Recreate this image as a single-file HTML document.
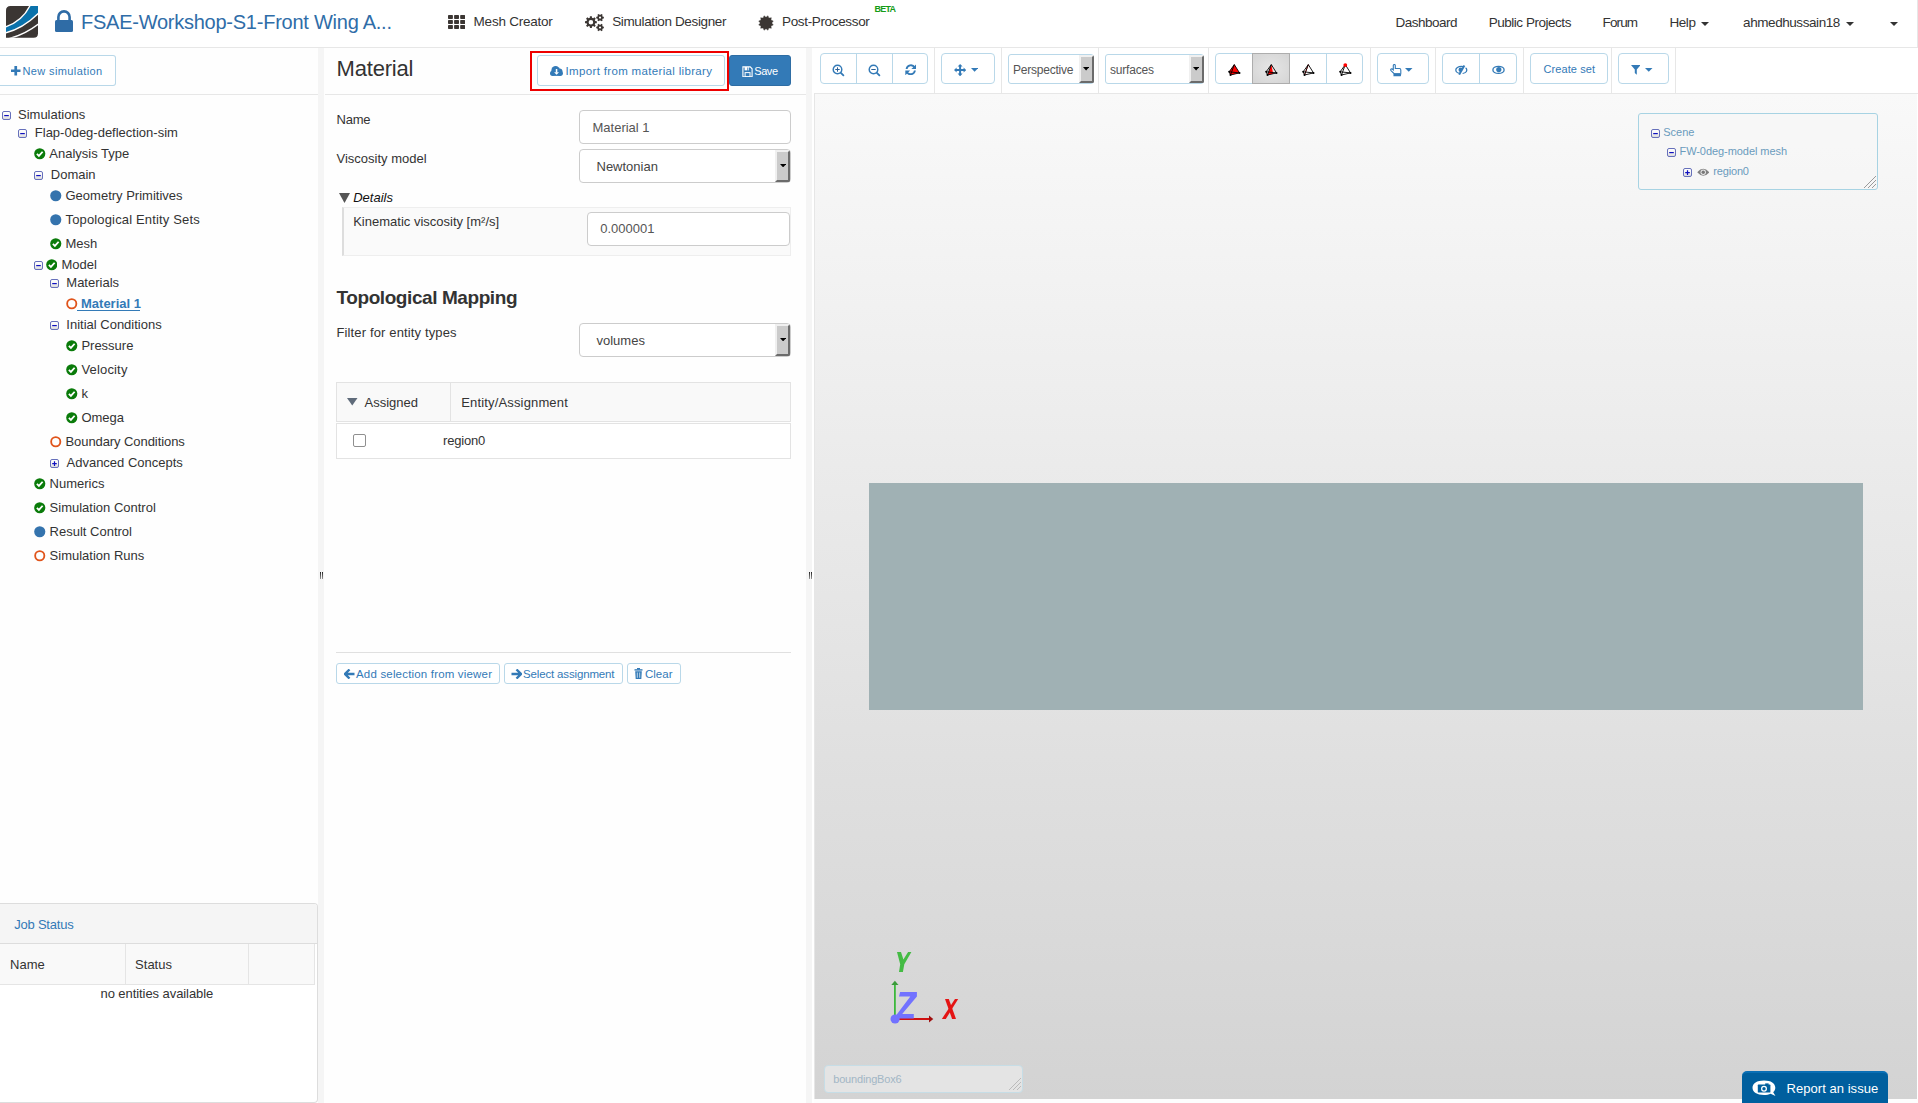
<!DOCTYPE html>
<html><head><meta charset="utf-8"><style>
html,body{margin:0;padding:0;width:1918px;height:1103px;overflow:hidden;background:#fff;}
body{position:relative;font-family:"Liberation Sans",sans-serif;}
.a{position:absolute;display:block;}
.t{position:absolute;white-space:nowrap;}
</style></head><body>
<div class="a" style="left:0px;top:0px;width:1918px;height:47px;background:#fff;"></div>
<div class="a" style="left:0px;top:47px;width:1918px;height:1px;background:#e7e7e7;"></div>
<div class="a" style="left:1917px;top:0px;width:1px;height:48px;background:#e7e7e7;"></div>
<div class="a" style="left:0px;top:48px;width:318px;height:1055px;background:#fefefe;"></div>
<div class="a" style="left:318px;top:48px;width:6px;height:1055px;background:#f5f5f5;"></div>
<div class="a" style="left:324px;top:48px;width:482px;height:1055px;background:#fefefe;"></div>
<div class="a" style="left:806px;top:48px;width:6px;height:1055px;background:#f5f5f5;"></div>
<div class="a" style="left:812px;top:48px;width:2px;height:1055px;background:#fff;"></div>
<div class="a" style="left:814px;top:48px;width:1104px;height:45px;background:#fff;"></div>
<div class="a" style="left:814px;top:93px;width:1104px;height:1px;background:#e7e7e7;"></div>
<div class="a" style="left:814px;top:94px;width:1103px;height:1005px;background:linear-gradient(#f9f9f9,#d3d3d3);"></div>
<div class="a" style="left:814px;top:93px;width:1px;height:1006px;background:#e6e6e6;"></div>
<div class="a" style="left:814px;top:1099px;width:1104px;height:4px;background:#fdfdfd;"></div>
<svg class="a" style="left:6px;top:6px;" width="32" height="32" viewBox="0 0 32 32"><defs><clipPath id="lc"><path d="M4.5,0 H32 V27.3 Q32,31.8 27.5,31.8 H0 V4.5 Q0,0 4.5,0Z"/></clipPath></defs>
<g clip-path="url(#lc)"><rect width="32" height="32" fill="#3b3633"/>
<path d="M-1,21.3 Q16.8,15.4 24.6,-1 L33,-1 L33,6.5 Q16.5,22.5 -1,26.6Z" fill="#0a72ab"/>
<path d="M-1,21.1 Q16.6,15.2 24.3,-1" stroke="#fff" stroke-width="1.4" fill="none"/>
<path d="M-1,27 Q16.7,22.9 33,6.8" stroke="#fff" stroke-width="1.4" fill="none"/>
<path d="M2.5,32.8 Q19.5,28.2 33,17.6" stroke="#fff" stroke-width="1.4" fill="none"/>
</g></svg>
<svg class="a" style="left:55px;top:10px;" width="18" height="22" viewBox="0 0 18 22"><path d="M3.4,11 V7.0 A5.6,5.6 0 0 1 14.6,7.0 V11" stroke="#2f6ca6" stroke-width="2.6" fill="none"/>
<rect x="0" y="10" width="18" height="12" rx="1.5" fill="#2f6ca6"/></svg>
<div class="t" style="left:81.0px;top:11.0px;font-size:20px;line-height:22px;color:#2f6da8;letter-spacing:-0.246px;">FSAE-Workshop-S1-Front Wing A...</div>
<svg class="a" style="left:448px;top:15px;" width="17.3" height="14" viewBox="0 0 17.3 14"><rect x="0.00" y="0.00" width="4.9" height="3.95" rx="0.7" fill="#3b3633"/><rect x="6.10" y="0.00" width="4.9" height="3.95" rx="0.7" fill="#3b3633"/><rect x="12.20" y="0.00" width="4.9" height="3.95" rx="0.7" fill="#3b3633"/><rect x="0.00" y="5.00" width="4.9" height="3.95" rx="0.7" fill="#3b3633"/><rect x="6.10" y="5.00" width="4.9" height="3.95" rx="0.7" fill="#3b3633"/><rect x="12.20" y="5.00" width="4.9" height="3.95" rx="0.7" fill="#3b3633"/><rect x="0.00" y="10.00" width="4.9" height="3.95" rx="0.7" fill="#3b3633"/><rect x="6.10" y="10.00" width="4.9" height="3.95" rx="0.7" fill="#3b3633"/><rect x="12.20" y="10.00" width="4.9" height="3.95" rx="0.7" fill="#3b3633"/></svg>
<div class="t" style="left:473.6px;top:13.5px;font-size:13.5px;line-height:15px;color:#333333;letter-spacing:-0.234px;">Mesh Creator</div>
<svg class="a" style="left:584px;top:10px;" width="22" height="22" viewBox="0 0 22 22"><path d="M11.27,11.12 L12.82,11.21 L12.82,13.19 L11.27,13.28 L10.76,14.52 L11.78,15.69 L10.39,17.08 L9.22,16.06 L7.98,16.57 L7.89,18.12 L5.91,18.12 L5.82,16.57 L4.58,16.06 L3.41,17.08 L2.02,15.69 L3.04,14.52 L2.53,13.28 L0.98,13.19 L0.98,11.21 L2.53,11.12 L3.04,9.88 L2.02,8.71 L3.41,7.32 L4.58,8.34 L5.82,7.83 L5.91,6.28 L7.89,6.28 L7.98,7.83 L9.22,8.34 L10.39,7.32 L11.78,8.71 L10.76,9.88 Z M6.90,12.20 m-2.30,0 a2.30,2.30 0 1 0 4.60,0 a2.30,2.30 0 1 0 -4.60,0" fill="#3b3633" fill-rule="evenodd"/><path d="M18.80,6.68 L19.86,6.75 L19.86,8.45 L18.80,8.52 L18.23,9.52 L18.69,10.47 L17.22,11.32 L16.62,10.44 L15.48,10.44 L14.88,11.32 L13.41,10.47 L13.87,9.52 L13.30,8.52 L12.24,8.45 L12.24,6.75 L13.30,6.68 L13.87,5.68 L13.41,4.73 L14.88,3.88 L15.48,4.76 L16.62,4.76 L17.22,3.88 L18.69,4.73 L18.23,5.68 Z M16.05,7.60 m-1.10,0 a1.10,1.10 0 1 0 2.20,0 a1.10,1.10 0 1 0 -2.20,0" fill="#3b3633" fill-rule="evenodd"/><path d="M18.80,16.58 L19.86,16.65 L19.86,18.35 L18.80,18.42 L18.23,19.42 L18.69,20.37 L17.22,21.22 L16.62,20.34 L15.48,20.34 L14.88,21.22 L13.41,20.37 L13.87,19.42 L13.30,18.42 L12.24,18.35 L12.24,16.65 L13.30,16.58 L13.87,15.58 L13.41,14.63 L14.88,13.78 L15.48,14.66 L16.62,14.66 L17.22,13.78 L18.69,14.63 L18.23,15.58 Z M16.05,17.50 m-1.10,0 a1.10,1.10 0 1 0 2.20,0 a1.10,1.10 0 1 0 -2.20,0" fill="#3b3633" fill-rule="evenodd"/></svg>
<div class="t" style="left:612.2px;top:13.5px;font-size:13.5px;line-height:15px;color:#333333;letter-spacing:-0.362px;">Simulation Designer</div>
<svg class="a" style="left:758.3px;top:14.5px;" width="16" height="16" viewBox="0 0 16 16"><path d="M15.34,9.97 L13.02,10.90 L13.37,13.37 L10.90,13.02 L9.97,15.34 L8.00,13.80 L6.03,15.34 L5.10,13.02 L2.63,13.37 L2.98,10.90 L0.66,9.97 L2.20,8.00 L0.66,6.03 L2.98,5.10 L2.63,2.63 L5.10,2.98 L6.03,0.66 L8.00,2.20 L9.97,0.66 L10.90,2.98 L13.37,2.63 L13.02,5.10 L15.34,6.03 L13.80,8.00 Z" fill="#3b3633" stroke="#3b3633" stroke-width="0.3" stroke-linejoin="round"/></svg>
<div class="t" style="left:782.0px;top:13.5px;font-size:13.5px;line-height:15px;color:#333333;letter-spacing:-0.344px;">Post-Processor</div>
<div class="t" style="left:874.5px;top:4.0px;font-size:9px;line-height:10px;color:#169c16;letter-spacing:-0.813px;font-weight:600;">BETA</div>
<div class="t" style="left:1395.4px;top:14.7px;font-size:13.5px;line-height:15px;color:#333333;letter-spacing:-0.505px;">Dashboard</div>
<div class="t" style="left:1488.7px;top:14.7px;font-size:13.5px;line-height:15px;color:#333333;letter-spacing:-0.470px;">Public Projects</div>
<div class="t" style="left:1602.6px;top:14.7px;font-size:13.5px;line-height:15px;color:#333333;letter-spacing:-0.901px;">Forum</div>
<div class="t" style="left:1669.4px;top:14.7px;font-size:13.5px;line-height:15px;color:#333333;letter-spacing:-0.389px;">Help</div>
<svg class="a" style="left:1701px;top:21.8px;" width="8" height="4" viewBox="0 0 8 4"><path d="M0,0 H8 L4.0,4 Z" fill="#333"/></svg>
<div class="t" style="left:1743.1px;top:14.7px;font-size:13.5px;line-height:15px;color:#333333;letter-spacing:-0.433px;">ahmedhussain18</div>
<svg class="a" style="left:1846px;top:21.8px;" width="8" height="4" viewBox="0 0 8 4"><path d="M0,0 H8 L4.0,4 Z" fill="#333"/></svg>
<svg class="a" style="left:1890px;top:21.8px;" width="8" height="4" viewBox="0 0 8 4"><path d="M0,0 H8 L4.0,4 Z" fill="#333"/></svg>
<div class="a" style="left:0px;top:55px;width:115.5px;height:31px;border:1px solid #b9d8e9;border-left:none;border-radius:0 3px 3px 0;background:#fff;box-sizing:border-box;"></div>
<svg class="a" style="left:11.2px;top:66.2px;" width="9.5" height="9.5" viewBox="0 0 9.5 9.5"><path d="M3.4,0 H6.1 V3.4 H9.5 V6.1 H6.1 V9.5 H3.4 V6.1 H0 V3.4 H3.4Z" fill="#337ab7"/></svg>
<div class="t" style="left:22.5px;top:64.8px;font-size:11px;line-height:12px;color:#337ab7;letter-spacing:0.386px;">New simulation</div>
<div class="a" style="left:0px;top:94px;width:318px;height:1px;background:#e7e7e7;"></div>
<svg class="a" style="left:2px;top:111px" width="9" height="9" viewBox="0 0 9 9"><defs><linearGradient id="tg" x1="0" y1="0" x2="0" y2="1"><stop offset="0" stop-color="#ffffff"/><stop offset="0.5" stop-color="#f4f4f4"/><stop offset="1" stop-color="#d8d8d8"/></linearGradient></defs><rect x="0.5" y="0.5" width="8" height="8" rx="1.5" fill="url(#tg)" stroke="#6670bb"/><path d="M2.2,4.6 H6.8" stroke="#1010c0" stroke-width="1.2"/></svg>
<div class="t" style="left:18.0px;top:107.0px;font-size:13px;line-height:15px;color:#333333;">Simulations</div>
<svg class="a" style="left:18px;top:129px" width="9" height="9" viewBox="0 0 9 9"><defs><linearGradient id="tg" x1="0" y1="0" x2="0" y2="1"><stop offset="0" stop-color="#ffffff"/><stop offset="0.5" stop-color="#f4f4f4"/><stop offset="1" stop-color="#d8d8d8"/></linearGradient></defs><rect x="0.5" y="0.5" width="8" height="8" rx="1.5" fill="url(#tg)" stroke="#6670bb"/><path d="M2.2,4.6 H6.8" stroke="#1010c0" stroke-width="1.2"/></svg>
<div class="t" style="left:34.8px;top:125.0px;font-size:13px;line-height:15px;color:#333333;">Flap-0deg-deflection-sim</div>
<svg class="a" style="left:34px;top:148px" width="11.5" height="11.5" viewBox="0 0 12 12"><circle cx="6" cy="6" r="5.8" fill="#0a7b0a"/><path d="M3,6.2 L5.1,8.2 L9,3.9" stroke="#fff" stroke-width="1.9" fill="none"/></svg>
<div class="t" style="left:49.3px;top:146.0px;font-size:13px;line-height:15px;color:#333333;">Analysis Type</div>
<svg class="a" style="left:34px;top:171px" width="9" height="9" viewBox="0 0 9 9"><defs><linearGradient id="tg" x1="0" y1="0" x2="0" y2="1"><stop offset="0" stop-color="#ffffff"/><stop offset="0.5" stop-color="#f4f4f4"/><stop offset="1" stop-color="#d8d8d8"/></linearGradient></defs><rect x="0.5" y="0.5" width="8" height="8" rx="1.5" fill="url(#tg)" stroke="#6670bb"/><path d="M2.2,4.6 H6.8" stroke="#1010c0" stroke-width="1.2"/></svg>
<div class="t" style="left:50.8px;top:167.0px;font-size:13px;line-height:15px;color:#333333;">Domain</div>
<svg class="a" style="left:50px;top:190px" width="11.5" height="11.5" viewBox="0 0 12 12"><circle cx="6" cy="6" r="5.8" fill="#3473ad"/></svg>
<div class="t" style="left:65.5px;top:188.0px;font-size:13px;line-height:15px;color:#333333;">Geometry Primitives</div>
<svg class="a" style="left:50px;top:214px" width="11.5" height="11.5" viewBox="0 0 12 12"><circle cx="6" cy="6" r="5.8" fill="#3473ad"/></svg>
<div class="t" style="left:65.5px;top:212.0px;font-size:13px;line-height:15px;color:#333333;letter-spacing:0.155px;">Topological Entity Sets</div>
<svg class="a" style="left:50px;top:238px" width="11.5" height="11.5" viewBox="0 0 12 12"><circle cx="6" cy="6" r="5.8" fill="#0a7b0a"/><path d="M3,6.2 L5.1,8.2 L9,3.9" stroke="#fff" stroke-width="1.9" fill="none"/></svg>
<div class="t" style="left:65.5px;top:236.0px;font-size:13px;line-height:15px;color:#333333;">Mesh</div>
<svg class="a" style="left:34.4px;top:261px" width="9" height="9" viewBox="0 0 9 9"><defs><linearGradient id="tg" x1="0" y1="0" x2="0" y2="1"><stop offset="0" stop-color="#ffffff"/><stop offset="0.5" stop-color="#f4f4f4"/><stop offset="1" stop-color="#d8d8d8"/></linearGradient></defs><rect x="0.5" y="0.5" width="8" height="8" rx="1.5" fill="url(#tg)" stroke="#6670bb"/><path d="M2.2,4.6 H6.8" stroke="#1010c0" stroke-width="1.2"/></svg>
<svg class="a" style="left:45.9px;top:259px" width="11.5" height="11.5" viewBox="0 0 12 12"><circle cx="6" cy="6" r="5.8" fill="#0a7b0a"/><path d="M3,6.2 L5.1,8.2 L9,3.9" stroke="#fff" stroke-width="1.9" fill="none"/></svg>
<div class="t" style="left:61.5px;top:257.0px;font-size:13px;line-height:15px;color:#333333;">Model</div>
<svg class="a" style="left:50px;top:279px" width="9" height="9" viewBox="0 0 9 9"><defs><linearGradient id="tg" x1="0" y1="0" x2="0" y2="1"><stop offset="0" stop-color="#ffffff"/><stop offset="0.5" stop-color="#f4f4f4"/><stop offset="1" stop-color="#d8d8d8"/></linearGradient></defs><rect x="0.5" y="0.5" width="8" height="8" rx="1.5" fill="url(#tg)" stroke="#6670bb"/><path d="M2.2,4.6 H6.8" stroke="#1010c0" stroke-width="1.2"/></svg>
<div class="t" style="left:66.3px;top:275.0px;font-size:13px;line-height:15px;color:#333333;">Materials</div>
<svg class="a" style="left:66.2px;top:298px" width="11.5" height="11.5" viewBox="0 0 12 12"><circle cx="6" cy="6" r="4.8" fill="none" stroke="#e0541b" stroke-width="1.9"/></svg>
<div class="t" style="left:81.0px;top:296.0px;font-size:13px;line-height:15px;color:#337ab7;font-weight:bold;">Material 1</div>
<div class="a" style="left:77.2px;top:310px;width:62.6px;height:1px;background:#337ab7;"></div>
<svg class="a" style="left:50px;top:321px" width="9" height="9" viewBox="0 0 9 9"><defs><linearGradient id="tg" x1="0" y1="0" x2="0" y2="1"><stop offset="0" stop-color="#ffffff"/><stop offset="0.5" stop-color="#f4f4f4"/><stop offset="1" stop-color="#d8d8d8"/></linearGradient></defs><rect x="0.5" y="0.5" width="8" height="8" rx="1.5" fill="url(#tg)" stroke="#6670bb"/><path d="M2.2,4.6 H6.8" stroke="#1010c0" stroke-width="1.2"/></svg>
<div class="t" style="left:66.3px;top:317.0px;font-size:13px;line-height:15px;color:#333333;">Initial Conditions</div>
<svg class="a" style="left:66.2px;top:340px" width="11.5" height="11.5" viewBox="0 0 12 12"><circle cx="6" cy="6" r="5.8" fill="#0a7b0a"/><path d="M3,6.2 L5.1,8.2 L9,3.9" stroke="#fff" stroke-width="1.9" fill="none"/></svg>
<div class="t" style="left:81.4px;top:338.0px;font-size:13px;line-height:15px;color:#333333;">Pressure</div>
<svg class="a" style="left:66.2px;top:364px" width="11.5" height="11.5" viewBox="0 0 12 12"><circle cx="6" cy="6" r="5.8" fill="#0a7b0a"/><path d="M3,6.2 L5.1,8.2 L9,3.9" stroke="#fff" stroke-width="1.9" fill="none"/></svg>
<div class="t" style="left:81.4px;top:362.0px;font-size:13px;line-height:15px;color:#333333;letter-spacing:0.171px;">Velocity</div>
<svg class="a" style="left:66.2px;top:388px" width="11.5" height="11.5" viewBox="0 0 12 12"><circle cx="6" cy="6" r="5.8" fill="#0a7b0a"/><path d="M3,6.2 L5.1,8.2 L9,3.9" stroke="#fff" stroke-width="1.9" fill="none"/></svg>
<div class="t" style="left:81.4px;top:386.0px;font-size:13px;line-height:15px;color:#333333;">k</div>
<svg class="a" style="left:66.2px;top:412px" width="11.5" height="11.5" viewBox="0 0 12 12"><circle cx="6" cy="6" r="5.8" fill="#0a7b0a"/><path d="M3,6.2 L5.1,8.2 L9,3.9" stroke="#fff" stroke-width="1.9" fill="none"/></svg>
<div class="t" style="left:81.4px;top:410.0px;font-size:13px;line-height:15px;color:#333333;">Omega</div>
<svg class="a" style="left:50px;top:436px" width="11.5" height="11.5" viewBox="0 0 12 12"><circle cx="6" cy="6" r="4.8" fill="none" stroke="#e0541b" stroke-width="1.9"/></svg>
<div class="t" style="left:65.5px;top:434.0px;font-size:13px;line-height:15px;color:#333333;letter-spacing:-0.078px;">Boundary Conditions</div>
<svg class="a" style="left:50px;top:459px" width="9" height="9" viewBox="0 0 9 9"><defs><linearGradient id="tg" x1="0" y1="0" x2="0" y2="1"><stop offset="0" stop-color="#ffffff"/><stop offset="0.5" stop-color="#f4f4f4"/><stop offset="1" stop-color="#d8d8d8"/></linearGradient></defs><rect x="0.5" y="0.5" width="8" height="8" rx="1.5" fill="url(#tg)" stroke="#6670bb"/><path d="M2.2,4.6 H6.8 M4.5,2.3 V6.9" stroke="#1010c0" stroke-width="1.2"/></svg>
<div class="t" style="left:66.5px;top:455.0px;font-size:13px;line-height:15px;color:#333333;">Advanced Concepts</div>
<svg class="a" style="left:34px;top:478px" width="11.5" height="11.5" viewBox="0 0 12 12"><circle cx="6" cy="6" r="5.8" fill="#0a7b0a"/><path d="M3,6.2 L5.1,8.2 L9,3.9" stroke="#fff" stroke-width="1.9" fill="none"/></svg>
<div class="t" style="left:49.6px;top:476.0px;font-size:13px;line-height:15px;color:#333333;">Numerics</div>
<svg class="a" style="left:34px;top:502px" width="11.5" height="11.5" viewBox="0 0 12 12"><circle cx="6" cy="6" r="5.8" fill="#0a7b0a"/><path d="M3,6.2 L5.1,8.2 L9,3.9" stroke="#fff" stroke-width="1.9" fill="none"/></svg>
<div class="t" style="left:49.6px;top:500.0px;font-size:13px;line-height:15px;color:#333333;">Simulation Control</div>
<svg class="a" style="left:34px;top:526px" width="11.5" height="11.5" viewBox="0 0 12 12"><circle cx="6" cy="6" r="5.8" fill="#3473ad"/></svg>
<div class="t" style="left:49.6px;top:524.0px;font-size:13px;line-height:15px;color:#333333;">Result Control</div>
<svg class="a" style="left:34px;top:550px" width="11.5" height="11.5" viewBox="0 0 12 12"><circle cx="6" cy="6" r="4.8" fill="none" stroke="#e0541b" stroke-width="1.9"/></svg>
<div class="t" style="left:49.6px;top:548.0px;font-size:13px;line-height:15px;color:#333333;">Simulation Runs</div>
<div class="a" style="left:0px;top:903px;width:318px;height:200px;border:1px solid #dddddd;border-left:none;border-radius:0 4px 4px 0;background:#fff;box-sizing:border-box;"></div>
<div class="a" style="left:0px;top:904px;width:317px;height:40px;background:#f5f5f5;border-bottom:1px solid #dddddd;border-radius:0 3px 0 0;box-sizing:border-box;"></div>
<div class="t" style="left:14.2px;top:916.5px;font-size:13px;line-height:15px;color:#337ab7;letter-spacing:-0.214px;">Job Status</div>
<div class="a" style="left:0px;top:944px;width:315px;height:41px;background:#f9f9f9;border-bottom:1px solid #e5e5e5;border-right:1px solid #e5e5e5;box-sizing:border-box;"></div>
<div class="a" style="left:124.5px;top:944px;width:1px;height:41px;background:#e5e5e5;"></div>
<div class="a" style="left:248px;top:944px;width:1px;height:41px;background:#e5e5e5;"></div>
<div class="t" style="left:10.1px;top:957.0px;font-size:13px;line-height:15px;color:#333333;">Name</div>
<div class="t" style="left:135.1px;top:957.0px;font-size:13px;line-height:15px;color:#333333;">Status</div>
<div class="t" style="left:100.5px;top:986.3px;font-size:13px;line-height:15px;color:#333333;letter-spacing:-0.069px;">no entities available</div>
<div class="a" style="left:320px;top:572px;width:1px;height:7px;background:linear-gradient(#222,#999);"></div>
<div class="a" style="left:322px;top:572px;width:1px;height:7px;background:linear-gradient(#222,#999);"></div>
<div class="a" style="left:808.5px;top:572px;width:1px;height:7px;background:linear-gradient(#222,#999);"></div>
<div class="a" style="left:810.5px;top:572px;width:1px;height:7px;background:linear-gradient(#222,#999);"></div>
<div class="t" style="left:336.5px;top:56.0px;font-size:22px;line-height:25px;color:#333333;letter-spacing:-0.178px;">Material</div>
<div class="a" style="left:530px;top:51px;width:199px;height:40px;border:2px solid #ee0000;box-sizing:border-box;"></div>
<div class="a" style="left:537px;top:55px;width:188px;height:31px;border:1px solid #b9d8e9;border-radius:3px;background:#fff;box-sizing:border-box;"></div>
<svg class="a" style="left:550px;top:66px;" width="13" height="10" viewBox="0 0 13 10"><g fill="#337ab7"><circle cx="2.6" cy="7.3" r="2.6"/><circle cx="5.6" cy="4.3" r="4.2"/><circle cx="9.6" cy="5.3" r="2.8"/><circle cx="10.3" cy="7.3" r="2.6"/><rect x="2.6" y="5" width="7.7" height="4.9"/></g><rect x="5.8" y="3" width="1.5" height="3.6" fill="#fff"/><path d="M4.1,6.2 H9 L6.55,8.7Z" fill="#fff"/></svg>
<div class="t" style="left:565.6px;top:65.0px;font-size:11.5px;line-height:12px;color:#337ab7;letter-spacing:0.334px;">Import from material library</div>
<div class="a" style="left:729px;top:55px;width:62px;height:31px;background:#337ab7;border:1px solid #2e6da4;border-radius:3px;box-sizing:border-box;"></div>
<svg class="a" style="left:741.5px;top:65.5px;" width="11" height="11.5" viewBox="0 0 11 11.5"><path d="M0.9,0.9 H8.2 L10.1,2.8 V10.8 H0.9Z" stroke="#fff" stroke-width="1.1" fill="none"/><rect x="2.6" y="1" width="2.6" height="3.4" fill="#fff"/><rect x="5.8" y="1" width="0.9" height="3.4" fill="#fff"/><rect x="3.1" y="6.6" width="4.9" height="4.2" stroke="#fff" stroke-width="1" fill="none"/></svg>
<div class="t" style="left:754.3px;top:65.0px;font-size:11px;line-height:12px;color:#fff;letter-spacing:-0.457px;">Save</div>
<div class="a" style="left:325px;top:94px;width:481px;height:1px;background:#e7e7e7;"></div>
<div class="t" style="left:336.5px;top:112.0px;font-size:13px;line-height:15px;color:#333333;letter-spacing:-0.226px;">Name</div>
<div class="a" style="left:579px;top:110px;width:212px;height:34px;border:1px solid #cccccc;border-radius:4px;background:#fff;box-sizing:border-box;"></div>
<div class="t" style="left:592.5px;top:120.0px;font-size:13px;line-height:15px;color:#555;">Material 1</div>
<div class="t" style="left:336.5px;top:151.0px;font-size:13px;line-height:15px;color:#333333;">Viscosity model</div>
<div class="a" style="left:579px;top:149px;width:212px;height:34px;border:1px solid #cccccc;border-radius:4px;background:#fff;box-sizing:border-box;"></div>
<div class="t" style="left:596.5px;top:159.0px;font-size:13px;line-height:15px;color:#444;">Newtonian</div>
<div class="a" style="left:775.2px;top:150px;width:15.3px;height:32.2px;background:#cbcbcb;border-right:2px solid #6b6b6b;border-bottom:2px solid #6b6b6b;border-top:2px solid #f0f0f0;border-left:2px solid #f0f0f0;border-radius:0 2px 2px 0;box-sizing:border-box;"></div>
<svg class="a" style="left:779.5500000000001px;top:164.1px;" width="6.2" height="3.4" viewBox="0 0 6.2 3.4"><path d="M0,0 H6.2 L3.1,3.4Z" fill="#000"/></svg>
<svg class="a" style="left:339px;top:193px;" width="11" height="10" viewBox="0 0 11 10"><path d="M0,0 H11 L5.5,10Z" fill="#555"/></svg>
<div class="t" style="left:353.2px;top:189.6px;font-size:13px;line-height:15px;color:#111;font-style:italic;">Details</div>
<div class="a" style="left:342px;top:207px;width:449px;height:49px;background:#fafafa;border:1px solid #eeeeee;border-left:2px solid #dddddd;box-sizing:border-box;"></div>
<div class="t" style="left:353.2px;top:213.5px;font-size:13px;line-height:15px;color:#333333;">Kinematic viscosity [m&#178;/s]</div>
<div class="a" style="left:587px;top:212px;width:203px;height:34px;border:1px solid #cccccc;border-radius:4px;background:#fff;box-sizing:border-box;"></div>
<div class="t" style="left:600.2px;top:221.0px;font-size:13px;line-height:15px;color:#555;">0.000001</div>
<div class="t" style="left:336.5px;top:287.0px;font-size:19px;line-height:21px;color:#333333;font-weight:bold;letter-spacing:-0.421px;">Topological Mapping</div>
<div class="t" style="left:336.5px;top:325.0px;font-size:13px;line-height:15px;color:#333333;letter-spacing:0.135px;">Filter for entity types</div>
<div class="a" style="left:579px;top:323px;width:212px;height:34px;border:1px solid #cccccc;border-radius:4px;background:#fff;box-sizing:border-box;"></div>
<div class="t" style="left:596.5px;top:333.0px;font-size:13px;line-height:15px;color:#444;">volumes</div>
<div class="a" style="left:775.2px;top:324px;width:15.3px;height:32.2px;background:#cbcbcb;border-right:2px solid #6b6b6b;border-bottom:2px solid #6b6b6b;border-top:2px solid #f0f0f0;border-left:2px solid #f0f0f0;border-radius:0 2px 2px 0;box-sizing:border-box;"></div>
<svg class="a" style="left:779.5500000000001px;top:338.1px;" width="6.2" height="3.4" viewBox="0 0 6.2 3.4"><path d="M0,0 H6.2 L3.1,3.4Z" fill="#000"/></svg>
<div class="a" style="left:336px;top:382px;width:455px;height:40px;background:#f9f9f9;border:1px solid #e3e3e3;box-sizing:border-box;"></div>
<div class="a" style="left:449.8px;top:383px;width:1px;height:38px;background:#e3e3e3;"></div>
<svg class="a" style="left:347px;top:398px;" width="10.5" height="7.5" viewBox="0 0 10.5 7.5"><path d="M0,0 H10.5 L5.25,7.5Z" fill="#5f6b7a"/></svg>
<div class="t" style="left:364.5px;top:395.0px;font-size:13px;line-height:15px;color:#333333;">Assigned</div>
<div class="t" style="left:461.3px;top:395.0px;font-size:13px;line-height:15px;color:#333333;letter-spacing:0.150px;">Entity/Assignment</div>
<div class="a" style="left:336px;top:423px;width:455px;height:36px;background:#fff;border:1px solid #e3e3e3;box-sizing:border-box;"></div>
<div class="a" style="left:353px;top:434px;width:13px;height:13px;border:1px solid #8f8f8f;border-radius:2px;background:#fff;box-sizing:border-box;"></div>
<div class="t" style="left:443.0px;top:432.5px;font-size:13px;line-height:15px;color:#333333;letter-spacing:-0.183px;">region0</div>
<div class="a" style="left:336px;top:652px;width:455px;height:1px;background:#e0e0e0;"></div>
<div class="a" style="left:336px;top:663px;width:163.5px;height:20.5px;border:1px solid #b9d8e9;border-radius:3px;background:#fff;box-sizing:border-box;"></div>

<div class="t" style="left:356.0px;top:667.8px;font-size:11.5px;line-height:12px;color:#337ab7;letter-spacing:0.181px;">Add selection from viewer</div>
<svg class="a" style="left:344px;top:669px;" width="11" height="10" viewBox="0 0 11 10"><path d="M5.5,0.5 L1,5 L5.5,9.5 M1.3,5 H10.5" stroke="#337ab7" stroke-width="2.4" fill="none"/></svg>
<div class="a" style="left:503.5px;top:663px;width:119px;height:20.5px;border:1px solid #b9d8e9;border-radius:3px;background:#fff;box-sizing:border-box;"></div>

<div class="t" style="left:523.0px;top:667.8px;font-size:11.5px;line-height:12px;color:#337ab7;letter-spacing:-0.154px;">Select assignment</div>
<svg class="a" style="left:510.5px;top:669px;" width="11" height="10" viewBox="0 0 11 10"><path d="M5.5,0.5 L10,5 L5.5,9.5 M0.5,5 H9.7" stroke="#337ab7" stroke-width="2.4" fill="none"/></svg>
<div class="a" style="left:626.5px;top:663px;width:54px;height:20.5px;border:1px solid #b9d8e9;border-radius:3px;background:#fff;box-sizing:border-box;"></div>

<div class="t" style="left:645.0px;top:667.8px;font-size:11.5px;line-height:12px;color:#337ab7;letter-spacing:0.005px;">Clear</div>
<svg class="a" style="left:634px;top:668px;" width="9" height="11" viewBox="0 0 9 11"><rect x="0.5" y="1.2" width="8" height="1.4" fill="#337ab7"/><rect x="3" y="0" width="3" height="1.5" fill="#337ab7"/><path d="M1.2,3.2 H7.8 L7.3,11 H1.7Z" fill="#337ab7"/><path d="M3.3,4.5 V9.8 M5.7,4.5 V9.8" stroke="#fff" stroke-width="0.7"/></svg>
<div class="a" style="left:934px;top:48px;width:1px;height:45px;background:#e7e7e7;"></div>
<div class="a" style="left:1001px;top:48px;width:1px;height:45px;background:#e7e7e7;"></div>
<div class="a" style="left:1098px;top:48px;width:1px;height:45px;background:#e7e7e7;"></div>
<div class="a" style="left:1208px;top:48px;width:1px;height:45px;background:#e7e7e7;"></div>
<div class="a" style="left:1370px;top:48px;width:1px;height:45px;background:#e7e7e7;"></div>
<div class="a" style="left:1435px;top:48px;width:1px;height:45px;background:#e7e7e7;"></div>
<div class="a" style="left:1523px;top:48px;width:1px;height:45px;background:#e7e7e7;"></div>
<div class="a" style="left:1611px;top:48px;width:1px;height:45px;background:#e7e7e7;"></div>
<div class="a" style="left:1675px;top:48px;width:1px;height:45px;background:#e7e7e7;"></div>
<div class="a" style="left:820px;top:53px;width:108px;height:31px;border:1px solid #b9d8e9;border-radius:4px;background:#fff;box-sizing:border-box;"></div>
<div class="a" style="left:856px;top:53px;width:1px;height:31px;background:#b9d8e9;"></div>
<div class="a" style="left:892px;top:53px;width:1px;height:31px;background:#b9d8e9;"></div>
<svg class="a" style="left:832px;top:63.5px;" width="13" height="13" viewBox="0 0 13 13"><circle cx="5.5" cy="5.5" r="4.3" stroke="#337ab7" stroke-width="1.45" fill="none"/><path d="M8.6,8.6 L11.4,11.4" stroke="#337ab7" stroke-width="1.8" stroke-linecap="round"/><path d="M3.3,5.5 H7.7 M5.5,3.3 V7.7" stroke="#2a5f96" stroke-width="1.0"/></svg>
<svg class="a" style="left:868px;top:63.5px;" width="13" height="13" viewBox="0 0 13 13"><circle cx="5.5" cy="5.5" r="4.3" stroke="#337ab7" stroke-width="1.45" fill="none"/><path d="M8.6,8.6 L11.4,11.4" stroke="#337ab7" stroke-width="1.8" stroke-linecap="round"/><path d="M3.3,5.5 H7.7" stroke="#2a5f96" stroke-width="1.0"/></svg>
<svg class="a" style="left:904.5px;top:63.5px;" width="11.5" height="11.5" viewBox="0 0 11.5 11.5"><path d="M1.6,5 A4.3,4.3 0 0 1 9.6,3.4" stroke="#337ab7" stroke-width="1.9" fill="none"/><path d="M11.2,0.2 V5 H6.4Z" fill="#337ab7"/><path d="M9.9,6.5 A4.3,4.3 0 0 1 1.9,8.1" stroke="#337ab7" stroke-width="1.9" fill="none"/><path d="M0.3,11.3 V6.5 H5.1Z" fill="#337ab7"/></svg>
<div class="a" style="left:941px;top:53px;width:54px;height:31px;border:1px solid #b9d8e9;border-radius:4px;background:#fff;box-sizing:border-box;"></div>
<svg class="a" style="left:953.8px;top:63.5px;" width="12.2" height="12.2" viewBox="0 0 12.2 12.2"><path d="M6.1,1 V11.2 M1,6.1 H11.2" stroke="#337ab7" stroke-width="2"/><path d="M6.1,0 L8.6,2.6 H3.6Z M6.1,12.2 L8.6,9.6 H3.6Z M0,6.1 L2.6,3.6 V8.6Z M12.2,6.1 L9.6,3.6 V8.6Z" fill="#337ab7"/></svg>
<svg class="a" style="left:971.2px;top:68px;" width="7.2" height="3.8" viewBox="0 0 7.2 3.8"><path d="M0,0 H7.2 L3.6,3.8 Z" fill="#337ab7"/></svg>
<div class="a" style="left:1008px;top:54px;width:86px;height:30px;border:1px solid #b9d8e9;border-radius:3px;background:#fff;box-sizing:border-box;"></div>
<div class="t" style="left:1013.0px;top:63.0px;font-size:12px;line-height:14px;color:#555;letter-spacing:-0.220px;">Perspective</div>
<div class="a" style="left:1078.8px;top:55.4px;width:14.8px;height:27.6px;background:#cbcbcb;border-right:2px solid #6b6b6b;border-bottom:2px solid #6b6b6b;border-top:2px solid #f0f0f0;border-left:2px solid #f0f0f0;border-radius:0 2px 2px 0;box-sizing:border-box;"></div>
<svg class="a" style="left:1082.9px;top:67.2px;" width="6.2" height="3.4" viewBox="0 0 6.2 3.4"><path d="M0,0 H6.2 L3.1,3.4Z" fill="#000"/></svg>
<div class="a" style="left:1105px;top:54px;width:99px;height:30px;border:1px solid #b9d8e9;border-radius:3px;background:#fff;box-sizing:border-box;"></div>
<div class="t" style="left:1110.0px;top:63.0px;font-size:12px;line-height:14px;color:#555;letter-spacing:-0.193px;">surfaces</div>
<div class="a" style="left:1188.8px;top:55.4px;width:14.8px;height:27.6px;background:#cbcbcb;border-right:2px solid #6b6b6b;border-bottom:2px solid #6b6b6b;border-top:2px solid #f0f0f0;border-left:2px solid #f0f0f0;border-radius:0 2px 2px 0;box-sizing:border-box;"></div>
<svg class="a" style="left:1192.9px;top:67.2px;" width="6.2" height="3.4" viewBox="0 0 6.2 3.4"><path d="M0,0 H6.2 L3.1,3.4Z" fill="#000"/></svg>
<div class="a" style="left:1215px;top:53px;width:148px;height:31px;border:1px solid #b9d8e9;border-radius:4px;background:#fff;box-sizing:border-box;"></div>
<div class="a" style="left:1252px;top:53px;width:38px;height:31px;background:radial-gradient(#e6e6e6,#d4d4d4);border:1px solid #adadad;box-sizing:border-box;"></div>
<div class="a" style="left:1326px;top:53px;width:1px;height:31px;background:#b9d8e9;"></div>
<svg class="a" style="left:1226.5px;top:60px;" width="14" height="18" viewBox="0 0 14 18"><path d="M7.3,4.6 L2.2,11.8 L3.5,15.0 L12.5,12.9 Z" fill="#ff0000"/><path d="M7.3,4.6 L2.2,11.8 L3.5,15.0 Z M3.5,15.0 L12.5,12.9 L7.3,4.6 M2.2,11.8 L12.5,12.9" stroke="#000" stroke-width="0.9" fill="none" stroke-linejoin="round"/><circle cx="2.2" cy="11.8" r="1" fill="#000"/><circle cx="3.5" cy="15.0" r="1" fill="#000"/><circle cx="12.5" cy="12.9" r="1" fill="#000"/></svg>
<svg class="a" style="left:1263.7px;top:60px;" width="14" height="18" viewBox="0 0 14 18"><path d="M7.3,4.6 L3.5,15.0 L9.2,13.8 Z" fill="#ff0000"/><path d="M7.3,4.6 L2.2,11.8 L3.5,15.0 Z M3.5,15.0 L12.5,12.9 L7.3,4.6 M2.2,11.8 L12.5,12.9" stroke="#000" stroke-width="0.9" fill="none" stroke-linejoin="round"/><circle cx="2.2" cy="11.8" r="1" fill="#000"/><circle cx="3.5" cy="15.0" r="1" fill="#000"/><circle cx="12.5" cy="12.9" r="1" fill="#000"/></svg>
<svg class="a" style="left:1300.5px;top:60px;" width="14" height="18" viewBox="0 0 14 18"><path d="M7.3,4.6 L3.5,15.0" stroke="#ff0000" stroke-width="0.8"/><path d="M7.3,4.6 L2.2,11.8 L3.5,15.0 Z M3.5,15.0 L12.5,12.9 L7.3,4.6 M2.2,11.8 L12.5,12.9" stroke="#000" stroke-width="0.9" fill="none" stroke-linejoin="round"/><circle cx="2.2" cy="11.8" r="1" fill="#000"/><circle cx="3.5" cy="15.0" r="1" fill="#000"/><circle cx="12.5" cy="12.9" r="1" fill="#000"/></svg>
<svg class="a" style="left:1337.5px;top:60px;" width="14" height="18" viewBox="0 0 14 18"><path d="M7.3,4.6 L2.2,11.8 L3.5,15.0 Z M3.5,15.0 L12.5,12.9 L7.3,4.6 M2.2,11.8 L12.5,12.9" stroke="#000" stroke-width="0.9" fill="none" stroke-linejoin="round"/><circle cx="2.2" cy="11.8" r="1" fill="#000"/><circle cx="3.5" cy="15.0" r="1" fill="#000"/><circle cx="12.5" cy="12.9" r="1" fill="#000"/><circle cx="7.3" cy="5.1" r="1.9" fill="#ff0000"/></svg>
<div class="a" style="left:1377px;top:53px;width:52px;height:31px;border:1px solid #b9d8e9;border-radius:4px;background:#fff;box-sizing:border-box;"></div>
<svg class="a" style="left:1389.5px;top:64px;" width="12" height="12.5" viewBox="0 0 12 12.5"><path d="M4,11.8 V9.5 L1,6.6 Q0.2,5.6 1.2,5 Q2,4.6 3,5.6 L3.3,5.9 V1.6 Q3.3,0.5 4.3,0.5 Q5.3,0.5 5.3,1.6 V4.5 H9.5 Q10.8,4.6 10.8,6 V9.5 L10.3,11.8Z" stroke="#337ab7" stroke-width="1.1" fill="#fff"/><rect x="4" y="9.1" width="6.4" height="2.9" fill="#337ab7"/></svg>
<svg class="a" style="left:1405.3px;top:68px;" width="7.5" height="3.8" viewBox="0 0 7.5 3.8"><path d="M0,0 H7.5 L3.75,3.8 Z" fill="#337ab7"/></svg>
<div class="a" style="left:1442px;top:53px;width:75px;height:31px;border:1px solid #b9d8e9;border-radius:4px;background:#fff;box-sizing:border-box;"></div>
<div class="a" style="left:1479px;top:53px;width:1px;height:31px;background:#b9d8e9;"></div>
<svg class="a" style="left:1454.5px;top:65px;" width="13" height="10" viewBox="0 0 13 10"><ellipse cx="6.3" cy="4.9" rx="5.5" ry="3.5" stroke="#337ab7" stroke-width="1.3" fill="none"/><circle cx="5.8" cy="4.8" r="2.3" fill="#337ab7"/><path d="M10.6,0.2 L5.4,9.8" stroke="#fff" stroke-width="2.6"/><path d="M9.4,0.5 L4.2,9.6" stroke="#337ab7" stroke-width="1.9"/></svg>
<svg class="a" style="left:1491.5px;top:65px;" width="13" height="10" viewBox="0 0 13 10"><ellipse cx="6.5" cy="4.9" rx="5.6" ry="3.5" stroke="#337ab7" stroke-width="1.35" fill="none"/><circle cx="6.8" cy="4.6" r="2.6" fill="#337ab7"/></svg>
<div class="a" style="left:1530px;top:53px;width:78px;height:31px;border:1px solid #b9d8e9;border-radius:4px;background:#fff;box-sizing:border-box;"></div>
<div class="t" style="left:1543.5px;top:62.7px;font-size:11px;line-height:12px;color:#337ab7;letter-spacing:0.084px;">Create set</div>
<div class="a" style="left:1618px;top:53px;width:51px;height:31px;border:1px solid #b9d8e9;border-radius:4px;background:#fff;box-sizing:border-box;"></div>
<svg class="a" style="left:1630.8px;top:65px;" width="9.6" height="9.8" viewBox="0 0 9.6 9.8"><path d="M0,0 H9.6 L5.8,4.5 V9.8 L3.8,8 V4.5Z" fill="#337ab7"/></svg>
<svg class="a" style="left:1645px;top:68px;" width="7.5" height="3.8" viewBox="0 0 7.5 3.8"><path d="M0,0 H7.5 L3.75,3.8 Z" fill="#337ab7"/></svg>
<div class="a" style="left:869px;top:483px;width:994px;height:227px;background:#a0b1b4;"></div>
<div class="a" style="left:1638px;top:113px;width:240px;height:77px;border:1px solid #a7d3e3;border-radius:3px;background:rgba(246,246,246,0.9);box-sizing:border-box;"></div>
<svg class="a" style="left:1651px;top:128.7px;" width="9" height="9" viewBox="0 0 9 9"><defs><linearGradient id="tg" x1="0" y1="0" x2="0" y2="1"><stop offset="0" stop-color="#ffffff"/><stop offset="0.5" stop-color="#f4f4f4"/><stop offset="1" stop-color="#d8d8d8"/></linearGradient></defs><rect x="0.5" y="0.5" width="8" height="8" rx="1.5" fill="url(#tg)" stroke="#6670bb"/><path d="M2.2,4.6 H6.8" stroke="#1010c0" stroke-width="1.2"/></svg>
<div class="t" style="left:1663.2px;top:126.0px;font-size:11px;line-height:12px;color:#6a9bbd;">Scene</div>
<svg class="a" style="left:1667px;top:147.9px;" width="9" height="9" viewBox="0 0 9 9"><defs><linearGradient id="tg" x1="0" y1="0" x2="0" y2="1"><stop offset="0" stop-color="#ffffff"/><stop offset="0.5" stop-color="#f4f4f4"/><stop offset="1" stop-color="#d8d8d8"/></linearGradient></defs><rect x="0.5" y="0.5" width="8" height="8" rx="1.5" fill="url(#tg)" stroke="#6670bb"/><path d="M2.2,4.6 H6.8" stroke="#1010c0" stroke-width="1.2"/></svg>
<div class="t" style="left:1679.5px;top:145.2px;font-size:11px;line-height:12px;color:#6a9bbd;letter-spacing:-0.065px;">FW-0deg-model mesh</div>
<svg class="a" style="left:1683px;top:167.9px;" width="9" height="9" viewBox="0 0 9 9"><defs><linearGradient id="tg" x1="0" y1="0" x2="0" y2="1"><stop offset="0" stop-color="#ffffff"/><stop offset="0.5" stop-color="#f4f4f4"/><stop offset="1" stop-color="#d8d8d8"/></linearGradient></defs><rect x="0.5" y="0.5" width="8" height="8" rx="1.5" fill="url(#tg)" stroke="#6670bb"/><path d="M2.2,4.6 H6.8 M4.5,2.3 V6.9" stroke="#1010c0" stroke-width="1.2"/></svg>
<svg class="a" style="left:1696.8px;top:167.8px;" width="12.5" height="8.6" viewBox="0 0 12.5 8.6"><path d="M0.2,4.3 Q6.25,-2.6 12.3,4.3 Q6.25,11.2 0.2,4.3Z" fill="#808080"/><circle cx="6.25" cy="4.3" r="2.7" fill="#e8e8e8"/><circle cx="6.25" cy="4.3" r="1.7" fill="#777"/></svg>
<div class="t" style="left:1713.2px;top:164.9px;font-size:11px;line-height:12px;color:#6a9bbd;letter-spacing:-0.149px;">region0</div>
<svg class="a" style="left:1862px;top:174px;" width="15" height="15" viewBox="0 0 15 15"><path d="M14,2 L2,14 M14,6 L6,14 M14,10 L10,14" stroke="#9a9a9a" stroke-width="1"/></svg>
<svg class="a" style="left:880px;top:945px;" width="90" height="80" viewBox="0 0 90 80"><path d="M14.9,71.0 L14.9,39.0" stroke="#3cb83c" stroke-width="1.8"/><path d="M14.9,35.8 L18.5,40.0 L11.3,40.0 Z" fill="#3a9a3a"/><path d="M17.0,74.0 L49.5,74.0" stroke="#d01010" stroke-width="1.8"/><path d="M53.3,74.0 L49.0,70.6 L49.0,77.4 Z" fill="#a01010"/><path d="M17.0,6.9 L21.0,6.9 L23.4,14.6 L28.1,6.9 L31.4,6.9 L24.3,19.3 L22.9,27.0 L19.0,27.0 L20.2,19.3 Z" fill="#44bb44"/><path d="M19.0,51.6 L20.1,47.1 L36.9,47.1 L36.9,51.6 L22.2,68.9 L33.8,68.9 L33.8,73.5 L17.0,73.5 L16.0,70.5 L30.3,51.6 Z" fill="#7272ff"/><circle cx="15.1" cy="74.0" r="4.6" fill="#7272ff"/><path d="M65.0,54.0 L68.8,54.0 L76.0,73.9 L72.1,73.9 Z" fill="#e41515"/><path d="M75.0,54.0 L78.2,54.0 L65.8,73.9 L61.9,73.9 Z" fill="#e41515"/></svg>
<div class="a" style="left:823.8px;top:1065px;width:199.5px;height:27.5px;border:1px solid #c6dde6;border-radius:4px;background:rgba(230,230,230,0.85);box-sizing:border-box;"></div>
<div class="t" style="left:833.2px;top:1073.0px;font-size:11px;line-height:12px;color:#a2b6c4;letter-spacing:-0.167px;">boundingBox6</div>
<svg class="a" style="left:1008px;top:1077px;" width="14" height="14" viewBox="0 0 14 14"><path d="M13,1 L1,13 M13,5 L5,13 M13,9 L9,13" stroke="#bbbbbb" stroke-width="1"/></svg>
<div class="a" style="left:1742px;top:1071px;width:146px;height:40px;background:#005f9e;border-radius:5px 5px 0 0;border-top:2px solid #0a6fb5;box-sizing:border-box;"></div>
<svg class="a" style="left:1752px;top:1080px;" width="25" height="17" viewBox="0 0 25 17"><path d="M12,0.5 C5,0.5 0.5,3.3 0.5,7.8 C0.5,12 5,15 12,15 C14.5,15 17,14.5 18.6,13.7 L23.5,16 L21.2,12.3 C22.5,11 23.3,9.6 23.3,7.8 C23.3,3.3 19,0.5 12,0.5Z" fill="#fff"/><rect x="5.8" y="4.6" width="12.6" height="8" rx="0.6" fill="#005f9e"/><rect x="13.2" y="3.4" width="3.4" height="1.6" fill="#005f9e"/><circle cx="12" cy="8.7" r="3" fill="#fff"/><circle cx="12" cy="8.7" r="1.7" fill="#005f9e"/></svg>
<div class="t" style="left:1786.6px;top:1081.0px;font-size:13px;line-height:15px;color:#fff;letter-spacing:0.039px;">Report an issue</div>
</body></html>
